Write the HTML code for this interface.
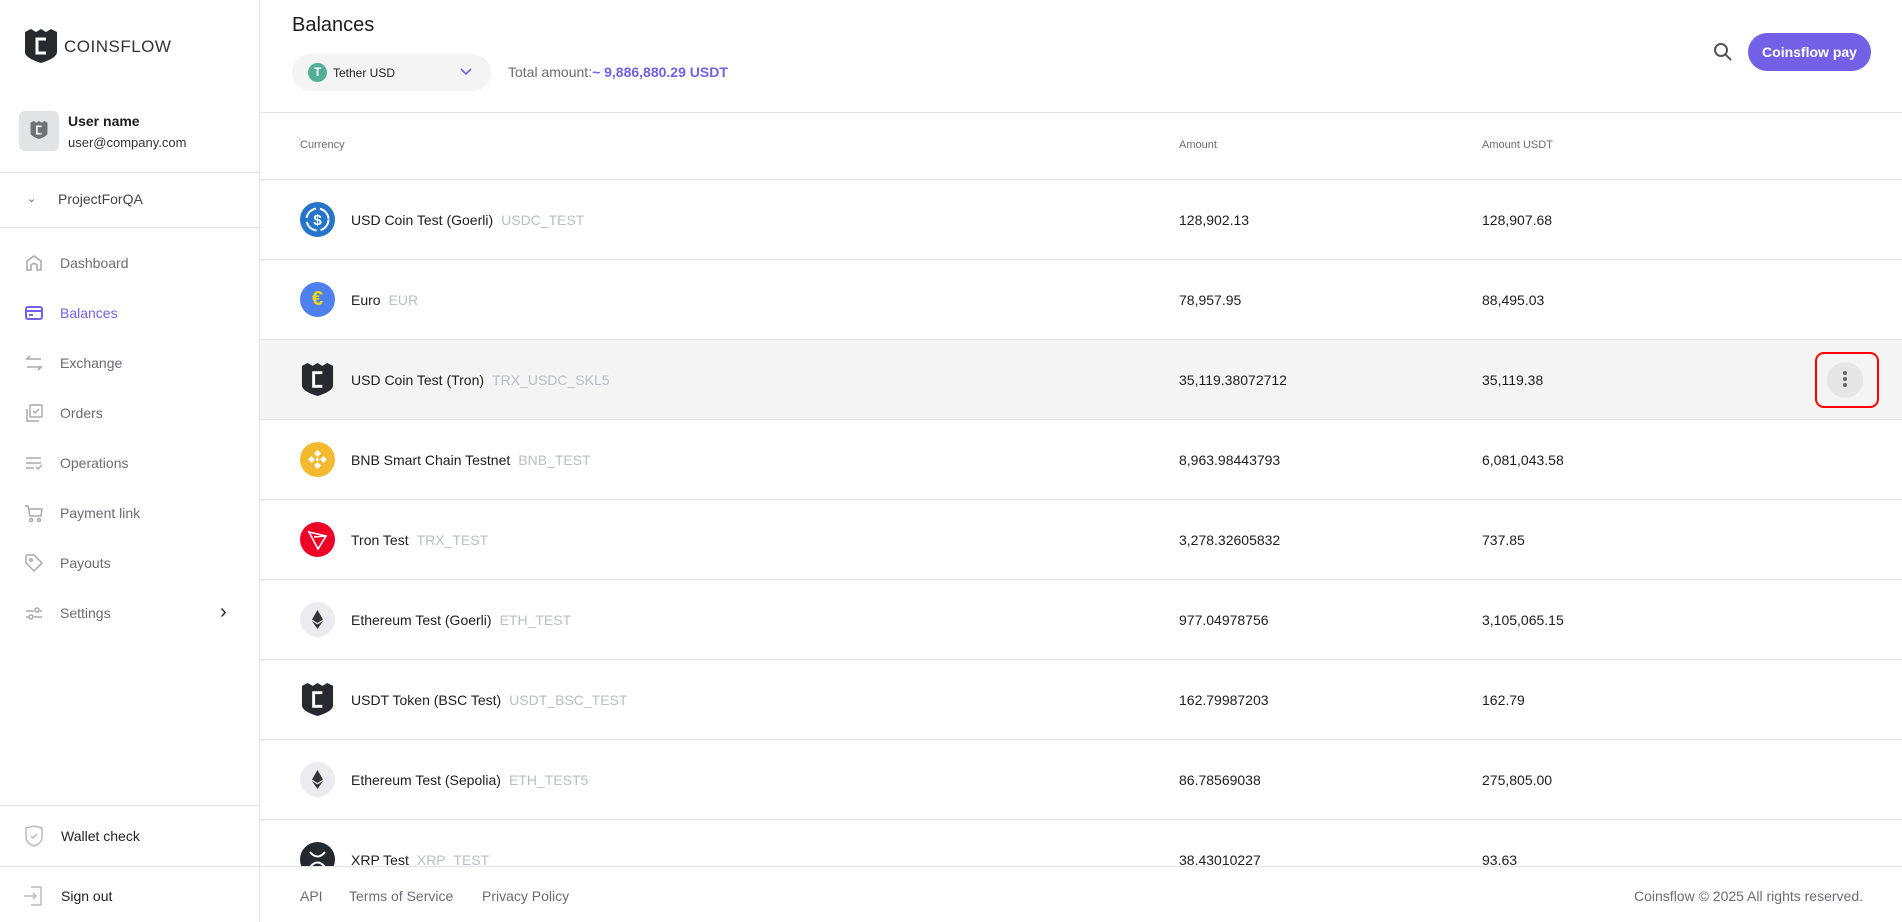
<!DOCTYPE html>
<html><head><meta charset="utf-8"><style>
*{box-sizing:border-box;margin:0;padding:0}
body{width:1902px;height:922px;overflow:hidden;font-family:"Liberation Sans",Arial,sans-serif;background:#fff;color:#1d1d1f;position:relative}
.sb{position:absolute;left:0;top:0;width:260px;height:922px;border-right:1px solid #e2e2e2;background:#fff}
.hl{position:absolute;left:0;width:259px;height:1px;background:#e2e2e2}
.nav{position:absolute;left:24px;font-size:14px;color:#6b6b76;display:flex;align-items:center}
.nav svg{width:20px;height:20px;margin-right:16px}
.a{position:absolute}
.row{position:absolute;left:260px;width:1642px;height:80px;border-bottom:1px solid #e2e2e2}
.row .ic{position:absolute;left:40px;top:22px;width:35px;height:35px;border-radius:50%}
.row .nm{position:absolute;left:91px;top:32px;font-size:14px;color:#1d1d1f}
.row .nm span{color:#b8bec4;margin-left:8px}
.row .am{position:absolute;left:919px;top:32px;font-size:14px}
.row .au{position:absolute;left:1222px;top:32px;font-size:14px}
</style></head><body>
<div class="sb">
  <svg class="a" style="left:24px;top:28px" width="34" height="36" viewBox="0 0 34 36"><path d="M1 4 L7 1 L12 4 L17 1 L22 4 L27 1 L33 4 V24 Q33 30 17 35 Q1 30 1 24 Z" fill="#262a2e"/><path d="M22 11 H13 V25 H22" fill="none" stroke="#fff" stroke-width="3"/></svg>
  <div class="a" style="left:64px;top:37px;font-size:17px;letter-spacing:0.5px;color:#333">COINSFLOW</div>
  <div class="a" style="left:19px;top:111px;width:40px;height:40px;border-radius:6px;background:#e2e3e4"></div>
  <svg class="a" style="left:30px;top:119px" width="18" height="22" viewBox="0 0 34 36"><path d="M1 4 L7 1 L12 4 L17 1 L22 4 L27 1 L33 4 V24 Q33 30 17 35 Q1 30 1 24 Z" fill="#6d7377"/><path d="M22 11 H13 V25 H22" fill="none" stroke="#fff" stroke-width="3"/></svg>
  <div class="a" style="left:68px;top:113px;font-size:14px;font-weight:bold">User name</div>
  <div class="a" style="left:68px;top:135px;font-size:13px;color:#333">user@company.com</div>
  <div class="hl" style="top:172px"></div>
  <div class="a" style="left:27px;top:192px;font-size:11px;color:#666">&#8964;</div>
  <div class="a" style="left:58px;top:191px;font-size:14px;color:#444">ProjectForQA</div>
  <div class="hl" style="top:227px"></div>
  <div class="nav" style="top:253px"><svg viewBox="0 0 20 20" fill="none" stroke="#aaa" stroke-width="1.6"><path d="M3 17 V8 L10 3 L17 8 V17 H13 V12 Q10 9 7 12 V17 Z"/></svg>Dashboard</div>
  <div class="nav" style="top:303px;color:#7260e6"><svg viewBox="0 0 20 20" fill="none" stroke="#7260e6" stroke-width="2"><rect x="2" y="4" width="16" height="12" rx="2"/><path d="M2 8 H18 M5 12 H9"/></svg>Balances</div>
  <div class="nav" style="top:353px"><svg viewBox="0 0 20 20" fill="none" stroke="#aaa" stroke-width="1.6"><path d="M17 6 H3 L6 3 M3 14 H17 L14 17"/></svg>Exchange</div>
  <div class="nav" style="top:403px"><svg viewBox="0 0 20 20" fill="none" stroke="#aaa" stroke-width="1.5"><rect x="6" y="2" width="12" height="12" rx="1"/><path d="M3 6 V18 H15 M9 8 L11 10 L15 6"/></svg>Orders</div>
  <div class="nav" style="top:453px"><svg viewBox="0 0 20 20" fill="none" stroke="#aaa" stroke-width="1.5"><path d="M2 5 H17 M2 10 H17 M2 15 H10 M12 14 L14 16 L18 12"/></svg>Operations</div>
  <div class="nav" style="top:503px"><svg viewBox="0 0 20 20" fill="none" stroke="#aaa" stroke-width="1.5"><path d="M1 3 H4 L6 13 H17 L18 6 H5"/><circle cx="7" cy="17" r="1.5"/><circle cx="15" cy="17" r="1.5"/></svg>Payment link</div>
  <div class="nav" style="top:553px"><svg viewBox="0 0 20 20" fill="none" stroke="#aaa" stroke-width="1.5"><path d="M2 3 V10 L10 18 L18 10 L10 2 H3 Z"/><circle cx="7" cy="7" r="1.3"/></svg>Payouts</div>
  <div class="nav" style="top:603px"><svg viewBox="0 0 20 20" fill="none" stroke="#aaa" stroke-width="1.5"><path d="M2 8 H10 M16 8 H18 M2 14 H4 M10 14 H18"/><circle cx="13" cy="7" r="2"/><circle cx="7" cy="14" r="2"/></svg>Settings</div>
  <div class="a" style="left:220px;top:601px;font-size:20px;color:#222">&#8250;</div>
  <div class="hl" style="top:805px"></div>
  <svg class="a" style="left:24px;top:825px" width="20" height="22" viewBox="0 0 20 22" fill="none" stroke="#bbb" stroke-width="1.5"><path d="M2 3 L10 1 L18 3 V12 Q18 18 10 21 Q2 18 2 12 Z M7 11 L9 13 L13 9"/></svg>
  <div class="a" style="left:61px;top:828px;font-size:14px;color:#222">Wallet check</div>
  <div class="hl" style="top:866px"></div>
  <svg class="a" style="left:22px;top:885px" width="22" height="22" viewBox="0 0 22 22" fill="none" stroke="#bbb" stroke-width="1.5"><path d="M9 2 H19 V20 H9 M2 11 H14 M11 8 L14 11 L11 14"/></svg>
  <div class="a" style="left:61px;top:888px;font-size:14px;color:#222">Sign out</div>
</div>

<div class="a" style="left:292px;top:14px;font-size:20px;color:#1d1d1f">Balances</div>
<div class="a" style="left:292px;top:54px;width:199px;height:37px;border-radius:19px;background:#f4f4f5"></div>
<div class="a" style="left:308px;top:63px;width:19px;height:19px;border-radius:50%;background:#50af95;color:#fff;font-size:12px;font-weight:bold;text-align:center;line-height:19px">T</div>
<div class="a" style="left:333px;top:66px;font-size:12px;color:#1d1d1f">Tether USD</div>
<svg class="a" style="left:460px;top:68px" width="12" height="8" viewBox="0 0 12 8"><path d="M1 1 L6 6 L11 1" fill="none" stroke="#7260e6" stroke-width="1.6"/></svg>
<div class="a" style="left:508px;top:64px;font-size:14px;color:#6b6b76">Total amount:<span style="color:#7260e6;font-weight:bold">~ 9,886,880.29 USDT</span></div>
<svg class="a" style="left:1713px;top:42px" width="20" height="20" viewBox="0 0 20 20" fill="none" stroke="#555" stroke-width="2"><circle cx="8" cy="8" r="6"/><path d="M12.5 12.5 L18 18"/></svg>
<div class="a" style="left:1748px;top:33px;width:123px;height:38px;border-radius:19px;background:#7260e6;color:#fff;font-size:14px;font-weight:bold;text-align:center;line-height:38px">Coinsflow pay</div>
<div class="a" style="left:260px;top:112px;width:1642px;height:1px;background:#e2e2e2"></div>
<div class="a" style="left:300px;top:139px;font-size:11px;color:#6b6b76">Currency</div>
<div class="a" style="left:1179px;top:139px;font-size:11px;color:#6b6b76">Amount</div>
<div class="a" style="left:1482px;top:139px;font-size:11px;color:#6b6b76">Amount USDT</div>
<div class="a" style="left:260px;top:179px;width:1642px;height:1px;background:#e2e2e2"></div>

<div class="row" style="top:180px"><div class="ic" style="background:#2775ca"><svg width="35" height="35" viewBox="0 0 35 35"><circle cx="17.5" cy="17.5" r="11" fill="none" stroke="#fff" stroke-width="2" stroke-dasharray="14 4"/><text x="17.5" y="23" font-size="15" font-weight="bold" fill="#fff" text-anchor="middle" font-family="Liberation Sans">$</text></svg></div><div class="nm">USD Coin Test (Goerli)<span>USDC_TEST</span></div><div class="am">128,902.13</div><div class="au">128,907.68</div></div>
<div class="row" style="top:260px"><div class="ic" style="background:#4f80f0;color:#f4d800;font-size:20px;font-weight:bold;text-align:center;line-height:35px">€</div><div class="nm">Euro<span>EUR</span></div><div class="am">78,957.95</div><div class="au">88,495.03</div></div>
<div class="row" style="top:340px;background:#f4f4f4"><svg class="ic" style="border-radius:0" viewBox="0 0 34 36"><path d="M1 4 L7 1 L12 4 L17 1 L22 4 L27 1 L33 4 V24 Q33 30 17 35 Q1 30 1 24 Z" fill="#262a2e"/><path d="M22 11 H13 V25 H22" fill="none" stroke="#fff" stroke-width="3"/></svg><div class="nm">USD Coin Test (Tron)<span>TRX_USDC_SKL5</span></div><div class="am">35,119.38072712</div><div class="au">35,119.38</div>
<div class="a" style="left:1555px;top:12px;width:64px;height:56px;border:2px solid #f00;border-radius:9px"></div>
<div class="a" style="left:1567px;top:22px;width:36px;height:36px;border-radius:50%;background:#e6e6e6"></div>
<div class="a" style="left:1583px;top:31px;width:4px;height:4px;border-radius:50%;background:#666;box-shadow:0 6px 0 #666,0 12px 0 #666"></div></div>
<div class="row" style="top:420px"><div class="ic" style="background:#f3ba2f"><svg width="35" height="35" viewBox="0 0 35 35" fill="#fff"><path d="M17.5 8 L21 11.5 L17.5 15 L14 11.5Z M17.5 20 L21 23.5 L17.5 27 L14 23.5Z M11.5 14 L15 17.5 L11.5 21 L8 17.5Z M23.5 14 L27 17.5 L23.5 21 L20 17.5Z M17.5 15.5 L19.5 17.5 L17.5 19.5 L15.5 17.5Z"/></svg></div><div class="nm">BNB Smart Chain Testnet<span>BNB_TEST</span></div><div class="am">8,963.98443793</div><div class="au">6,081,043.58</div></div>
<div class="row" style="top:500px"><div class="ic" style="background:#ef0027"><svg width="35" height="35" viewBox="0 0 35 35" fill="none" stroke="#fff" stroke-width="1.6"><path d="M9 10 L26 14 L18 27 Z M9 10 L18 27 M14 15 L26 14"/></svg></div><div class="nm">Tron Test<span>TRX_TEST</span></div><div class="am">3,278.32605832</div><div class="au">737.85</div></div>
<div class="row" style="top:580px"><div class="ic" style="background:#ececf0"><svg width="35" height="35" viewBox="0 0 35 35"><path d="M17.5 8 L23 17.5 L17.5 21 L12 17.5Z" fill="#333"/><path d="M12 19 L17.5 22.5 L23 19 L17.5 27Z" fill="#333"/></svg></div><div class="nm">Ethereum Test (Goerli)<span>ETH_TEST</span></div><div class="am">977.04978756</div><div class="au">3,105,065.15</div></div>
<div class="row" style="top:660px"><svg class="ic" style="border-radius:0" viewBox="0 0 34 36"><path d="M1 4 L7 1 L12 4 L17 1 L22 4 L27 1 L33 4 V24 Q33 30 17 35 Q1 30 1 24 Z" fill="#262a2e"/><path d="M22 11 H13 V25 H22" fill="none" stroke="#fff" stroke-width="3"/></svg><div class="nm">USDT Token (BSC Test)<span>USDT_BSC_TEST</span></div><div class="am">162.79987203</div><div class="au">162.79</div></div>
<div class="row" style="top:740px"><div class="ic" style="background:#ececf0"><svg width="35" height="35" viewBox="0 0 35 35"><path d="M17.5 8 L23 17.5 L17.5 21 L12 17.5Z" fill="#333"/><path d="M12 19 L17.5 22.5 L23 19 L17.5 27Z" fill="#333"/></svg></div><div class="nm">Ethereum Test (Sepolia)<span>ETH_TEST5</span></div><div class="am">86.78569038</div><div class="au">275,805.00</div></div>
<div class="row" style="top:820px;border:none"><div class="ic" style="background:#23292f"><svg width="35" height="35" viewBox="0 0 35 35" fill="none" stroke="#fff" stroke-width="2"><path d="M10 10 Q17.5 19 25 10 M10 25 Q17.5 16 25 25"/></svg></div><div class="nm">XRP Test<span>XRP_TEST</span></div><div class="am">38.43010227</div><div class="au">93.63</div></div>

<div class="a" style="left:260px;top:866px;width:1642px;height:56px;background:#fff;border-top:1px solid #e2e2e2"></div>
<div class="a" style="left:300px;top:888px;font-size:14px;color:#6b6b76">API</div>
<div class="a" style="left:349px;top:888px;font-size:14px;color:#6b6b76">Terms of Service</div>
<div class="a" style="left:482px;top:888px;font-size:14px;color:#6b6b76">Privacy Policy</div>
<div class="a" style="right:39px;top:888px;font-size:14px;color:#6b6b76">Coinsflow © 2025 All rights reserved.</div>
</body></html>
